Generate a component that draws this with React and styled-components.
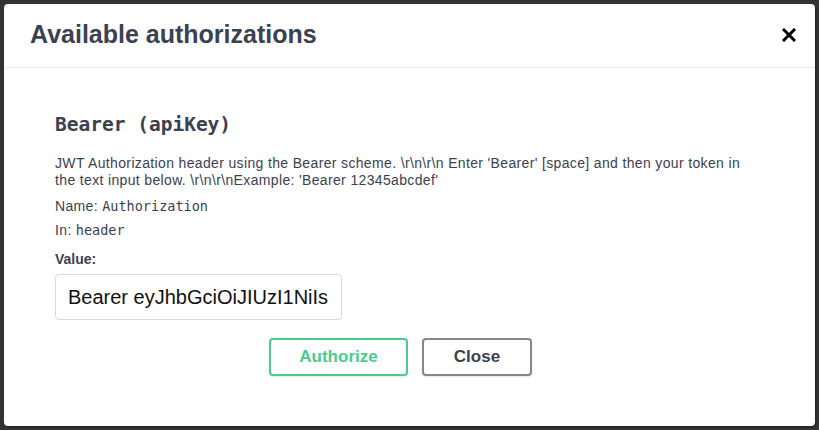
import React from 'react';
import styled, { createGlobalStyle } from 'styled-components';

const GlobalStyle = createGlobalStyle`
  html, body {
    margin: 0;
    padding: 0;
    background: #333;
  }
  body {
    font-family: "Liberation Sans", Arial, sans-serif;
    color: #3b4151;
  }
`;

const Backdrop = styled.div`
  width: 819px;
  height: 430px;
  padding: 4px;
  box-sizing: border-box;
`;

const Modal = styled.div`
  height: 100%;
  background: #fff;
  border-radius: 4px;
  box-shadow: 1px 1px 2px rgba(0, 0, 0, 0.4);
  display: flex;
  flex-direction: column;
`;

const Header = styled.div`
  height: 64px;
  box-sizing: border-box;
  display: flex;
  align-items: center;
  justify-content: space-between;
  padding: 0 19px 2px 26px;
  border-bottom: 1px solid #ebebeb;
`;

const Title = styled.h3`
  margin: 0;
  font-size: 25px;
  font-weight: 700;
  color: #3b4151;
`;

const CloseIcon = styled.button`
  border: none;
  background: none;
  padding: 0;
  width: 14px;
  height: 14px;
  display: flex;
  cursor: pointer;
`;

const Content = styled.div`
  padding: 45px 60px 0 51px;
`;

const SchemeTitle = styled.h4`
  margin: 0 0 19px;
  font-family: "DejaVu Sans Mono", "Liberation Mono", monospace;
  font-size: 19.5px;
  line-height: 23px;
  font-weight: 700;
  color: #3b4151;
`;

const Text = styled.p`
  margin: 0 0 ${(p) => p.gap || 8}px;
  font-size: 14px;
  letter-spacing: 0.35px;
  line-height: 17px;
  color: #3b4151;
`;

const Mono = styled.code`
  font-family: "DejaVu Sans Mono", "Liberation Mono", monospace;
  font-size: 13.5px;
  letter-spacing: 0;
`;

const Label = styled.label`
  display: block;
  font-size: 14px;
  line-height: 17px;
  font-weight: 700;
  margin-bottom: 6px;
`;

const Input = styled.input`
  width: 287px;
  height: 46px;
  box-sizing: border-box;
  border: 1px solid #d9d9d9;
  border-radius: 4px;
  padding: 0 12px;
  font-family: "Liberation Sans", Arial, sans-serif;
  font-size: 20px;
  color: #111;
  outline: none;
`;

const Buttons = styled.div`
  display: flex;
  justify-content: center;
  gap: 14px;
  margin-top: 18px;
  padding-right: 9px;
`;

const Button = styled.button`
  height: 38px;
  box-sizing: border-box;
  width: ${(p) => p.w}px;
  border: 2px solid ${(p) => (p.primary ? '#49cc90' : '#888')};
  color: ${(p) => (p.primary ? '#49cc90' : '#3b4151')};
  background: #fff;
  border-radius: 4px;
  font-family: "Liberation Sans", Arial, sans-serif;
  font-size: 17px;
  font-weight: 700;
  box-shadow: 0 1px 2px rgba(0, 0, 0, 0.1);
  cursor: pointer;
`;

export default function App() {
  return (
    <Backdrop>
      <GlobalStyle />
      <Modal>
        <Header>
          <Title>Available authorizations</Title>
          <CloseIcon aria-label="close">
            <svg width="14" height="14" viewBox="0 0 14 14">
              <path d="M2 2 L12 12 M12 2 L2 12" stroke="#000" strokeWidth="3" strokeLinecap="square" />
            </svg>
          </CloseIcon>
        </Header>
        <Content>
          <SchemeTitle>Bearer (apiKey)</SchemeTitle>
          <Text gap={9}>
            JWT Authorization header using the Bearer scheme. \r\n\r\n Enter 'Bearer' [space] and then your token in the text input below. \r\n\r\nExample: 'Bearer 12345abcdef'
          </Text>
          <Text gap={7}>
            Name: <Mono>Authorization</Mono>
          </Text>
          <Text gap={12}>
            In: <Mono>header</Mono>
          </Text>
          <Label htmlFor="value">Value:</Label>
          <Input id="value" type="text" defaultValue="Bearer eyJhbGciOiJIUzI1NiIsInR5cCI6IkpXVCJ9" />
          <Buttons>
            <Button primary w={139}>Authorize</Button>
            <Button w={110}>Close</Button>
          </Buttons>
        </Content>
      </Modal>
    </Backdrop>
  );
}
